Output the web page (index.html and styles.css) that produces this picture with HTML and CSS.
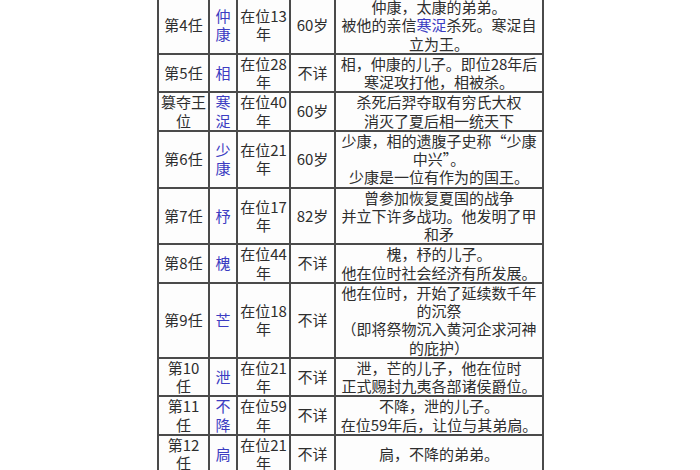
FILE: index.html
```html
<!DOCTYPE html>
<html lang="zh">
<head>
<meta charset="utf-8">
<link rel="stylesheet" href="styles.css">
</head>
<body>
<table class="kings">
  <colgroup>
    <col class="c-no"><col class="c-name"><col class="c-reign"><col class="c-age"><col class="c-note">
  </colgroup>
  <tr>
    <td>第4任</td><td><a class="lk">仲康</a></td><td>在位13<br>年</td><td>60岁</td>
    <td>仲康，太康的弟弟。<br>被他的亲信<a class="lk">寒浞</a>杀死。寒浞自立为王。</td>
  </tr>
  <tr>
    <td>第5任</td><td><a class="lk">相</a></td><td>在位28<br>年</td><td>不详</td>
    <td>相，仲康的儿子。即位28年后寒浞攻打他，相被杀。</td>
  </tr>
  <tr>
    <td>篡夺王<br>位</td><td><a class="lk">寒浞</a></td><td>在位40<br>年</td><td>60岁</td>
    <td>杀死后羿夺取有穷氏大权<br>消灭了夏后相一统天下</td>
  </tr>
  <tr>
    <td>第6任</td><td><a class="lk">少康</a></td><td>在位21<br>年</td><td>60岁</td>
    <td>少康，相的遗腹子史称“少康中兴”。<br>少康是一位有作为的国王。</td>
  </tr>
  <tr>
    <td>第7任</td><td><a class="lk">杼</a></td><td>在位17<br>年</td><td>82岁</td>
    <td>曾参加恢复夏国的战争<br>并立下许多战功。他发明了甲和矛</td>
  </tr>
  <tr>
    <td>第8任</td><td><a class="lk">槐</a></td><td>在位44<br>年</td><td>不详</td>
    <td>槐，杼的儿子。<br>他在位时社会经济有所发展。</td>
  </tr>
  <tr>
    <td>第9任</td><td><a class="lk">芒</a></td><td>在位18<br>年</td><td>不详</td>
    <td>他在位时，开始了延续数千年的沉祭<br>（即将祭物沉入黄河企求河神的庇护）</td>
  </tr>
  <tr>
    <td>第10<br>任</td><td><a class="lk">泄</a></td><td>在位21<br>年</td><td>不详</td>
    <td>泄，芒的儿子，他在位时<br>正式赐封九夷各部诸侯爵位。</td>
  </tr>
  <tr>
    <td>第11<br>任</td><td><a class="lk">不降</a></td><td>在位59<br>年</td><td>不详</td>
    <td>不降，泄的儿子。<br>在位59年后，让位与其弟扃。</td>
  </tr>
  <tr>
    <td>第12<br>任</td><td><a class="lk">扃</a></td><td>在位21<br>年</td><td>不详</td>
    <td>扃，不降的弟弟。</td>
  </tr>
</table>
</body>
</html>
```

FILE: styles.css
```css
html, body {
  margin: 0;
  padding: 0;
  background: #ffffff;
}
body {
  width: 700px;
  height: 470px;
  overflow: hidden;
  font-family: "Noto Sans CJK SC", "Noto Sans", sans-serif;
  font-size: 15px;
  color: #2e2e2e;
}
.kings {
  border-collapse: collapse;
  table-layout: fixed;
  width: 385px;
  margin: -4px 0 0 157px;
  background: #fdfdfd;
}
.c-no { width: 51px; }
.c-name { width: 28px; }
.c-reign { width: 53px; }
.c-age { width: 45px; }
.c-note { width: 208px; }
.kings td {
  border: 2px solid #4a4a4a;
  padding: 0 1px;
  line-height: 18.25px;
  text-align: center;
  vertical-align: middle;
  white-space: normal;
}
.lk {
  color: #3c3cc2;
  text-decoration: none;
}
```
